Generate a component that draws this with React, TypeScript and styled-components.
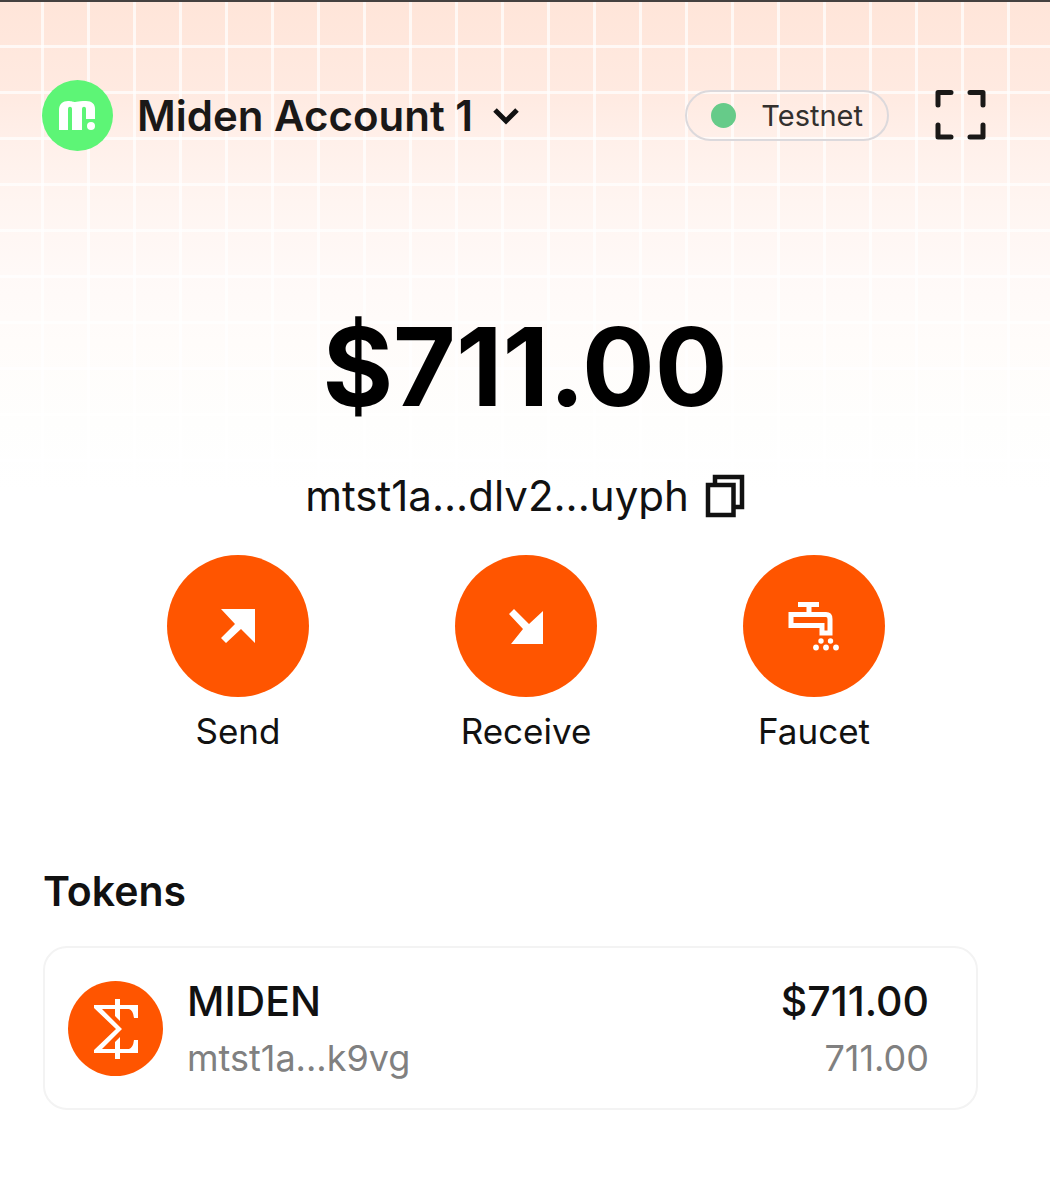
import React from "react";
import styled, { createGlobalStyle } from "styled-components";

const GlobalStyle = createGlobalStyle`
  *, *::before, *::after { box-sizing: border-box; }
  body {
    margin: 0;
    background: #ffffff;
    color: #111111;
    font-family: Inter, "Liberation Sans", sans-serif;
  }
  button {
    margin: 0;
    padding: 0;
    border: 0;
    background: none;
    color: inherit;
    font: inherit;
    cursor: pointer;
  }
  svg { display: block; flex: none; }
`;

const Page = styled.div`
  min-height: 100vh;
  border-top: 2px solid #454140;
`;

const Hero = styled.div`
  background:
    linear-gradient(to right, rgba(255, 255, 255, 0.7) 3px, transparent 3px) -5px 0 / 46px 100%,
    linear-gradient(to bottom, rgba(255, 255, 255, 0.7) 3px, transparent 3px) 0 -3px / 100% 46px,
    linear-gradient(to bottom, #ffe5d9 0, #ffeae1 90px, #fff0ea 140px, #fff5f1 200px, #fff9f7 270px, #fffcfa 340px, #fefefd 420px, #ffffff 490px);
`;

const Header = styled.header`
  display: flex;
  align-items: center;
  justify-content: space-between;
  padding: 78px 64px 0 42px;
`;

const AccountButton = styled.button`
  display: flex;
  align-items: center;
  color: #1a1817;
`;

const AccountName = styled.span`
  margin: 0 18px 0 24px;
  font-size: 42px;
  line-height: 48px;
  font-weight: 600;
`;

const HeaderTools = styled.div`
  display: flex;
  align-items: center;
  gap: 46px;
`;

const NetworkBadge = styled.button`
  display: flex;
  align-items: center;
  gap: 25px;
  height: 51px;
  padding: 0 24px;
  border: 2px solid #dcd9dc;
  border-radius: 26px;
  color: #33302e;
  font-size: 29px;
  line-height: 36px;
`;

const StatusDot = styled.span`
  width: 25px;
  height: 25px;
  border-radius: 50%;
  background: #66cb89;
`;

const Balance = styled.h1`
  margin: 0;
  padding-top: 152px;
  color: #000000;
  text-align: center;
  font-size: 108px;
  line-height: 128px;
  font-weight: 700;
`;

const AddressButton = styled.button`
  display: flex;
  align-items: center;
  gap: 16px;
  margin: 41px auto 0;
  font-size: 42px;
  line-height: 48px;
`;

const Actions = styled.nav`
  display: flex;
  justify-content: center;
  gap: 146px;
  padding: 35px 0 0 2px;
`;

const ActionButton = styled.button`
  display: flex;
  flex-direction: column;
  align-items: center;
  gap: 13px;
  width: 142px;
  font-size: 35px;
  line-height: 42px;
`;

const ActionDisc = styled.span`
  display: grid;
  place-items: center;
  width: 142px;
  height: 142px;
  border-radius: 50%;
  background: #ff5500;
`;

const TokensSection = styled.section`
  padding: 114px 72px 0 43px;
`;

const SectionTitle = styled.h2`
  margin: 0 0 30px;
  font-size: 41px;
  line-height: 50px;
  font-weight: 600;
`;

const TokenRow = styled.button`
  display: flex;
  align-items: center;
  gap: 24px;
  width: 100%;
  padding: 26px 47px 26px 23px;
  border: 2px solid #f3f3f3;
  border-radius: 24px;
  background: #ffffff;
`;

const TokenColumn = styled.span<{ $end?: boolean }>`
  display: flex;
  flex-direction: column;
  gap: 6px;
  margin-left: ${(p) => (p.$end ? "auto" : "0")};
  text-align: ${(p) => (p.$end ? "right" : "left")};
`;

const TokenPrimary = styled.span`
  font-size: 41px;
  line-height: 54px;
  font-weight: 500;
`;

const TokenSecondary = styled.span`
  color: #808080;
  font-size: 36px;
  line-height: 48px;
`;

const MidenAvatar = () => (
  <svg width="71" height="71" viewBox="0 0 71 71" aria-hidden="true">
    <circle cx="35.5" cy="35.5" r="35.5" fill="#5df576" />
    <path
      fill="#ffffff"
      d="M17 50V30C17 24 21 21 26 21c4 0 5 1 7 1s4-1 8-1h3c6 0 9 3 9 8v10h-9V29c0-3-4-3-4 0v21H30V29c0-3-4-3-4 0v21z"
    />
    <circle cx="49" cy="46" r="4" fill="#ffffff" />
  </svg>
);

const ChevronIcon = () => (
  <svg width="30" height="20" viewBox="0 0 30 20" fill="none" aria-hidden="true">
    <path d="M4 4 15 15 26 4" stroke="#111111" strokeWidth="5" />
  </svg>
);

const ExpandIcon = () => (
  <svg width="51" height="51" viewBox="0 0 51 51" fill="none" aria-hidden="true">
    <path
      d="M3 15V2.500H16M35 2.500H48V15M48 35V47H35M16 47H3V35"
      stroke="#1a1817"
      strokeWidth="5"
      strokeLinecap="round"
      strokeLinejoin="round"
    />
  </svg>
);

const CopyIcon = () => (
  <svg width="40" height="44" viewBox="0 0 40 44" fill="none" aria-hidden="true">
    <path d="M10 9V3H37V33H30M3 11H28.5V41H3Z" stroke="#111111" strokeWidth="4.5" />
  </svg>
);

const SendIcon = () => (
  <svg width="34" height="34" viewBox="0 0 34 34" aria-hidden="true">
    <path fill="#ffffff" d="M0 0H34V34L20 20 5 34 0 29 14 15z" />
  </svg>
);

const ReceiveIcon = () => (
  <svg width="36" height="36" viewBox="0 0 36 36" aria-hidden="true">
    <path fill="#ffffff" d="M1 6 6 1 21 16 35 3V36H3L15 21z" />
  </svg>
);

const FaucetIcon = () => (
  <svg width="52" height="50" viewBox="0 0 52 50" fill="none" aria-hidden="true">
    <path d="M10 3.5H31M21 4V12" stroke="#ffffff" strokeWidth="5" />
    <path d="M3 13.5H38Q42 13.5 42 18V32H34V24.500H3Z" stroke="#ffffff" strokeWidth="5" />
    <g fill="#ffffff">
      <circle cx="33" cy="40" r="2.700" />
      <circle cx="42.500" cy="40" r="2.700" />
      <circle cx="28" cy="46.500" r="2.900" />
      <circle cx="38" cy="46.500" r="2.900" />
      <circle cx="48" cy="46.500" r="2.900" />
    </g>
  </svg>
);

const SigmaToken = () => (
  <svg width="95" height="95" viewBox="0 0 95 95" fill="none" aria-hidden="true">
    <circle cx="47.5" cy="47.5" r="47.5" fill="#ff5500" />
    <path
      fill="#ffffff"
      d="M26 24H47V18H52V24H70V37H66Q65 29 61 28H52V40L47 35V28H34L54 48 34 68H47V61L52 56V68H61Q65 67 66 59H70V72H52V78H47V72H26V69L48 48 26 27Z"
    />
  </svg>
);

export default function App() {
  return (
    <Page>
      <GlobalStyle />
      <Hero>
        <Header>
          <AccountButton type="button">
            <MidenAvatar />
            <AccountName>Miden Account 1</AccountName>
            <ChevronIcon />
          </AccountButton>
          <HeaderTools>
            <NetworkBadge type="button">
              <StatusDot />
              Testnet
            </NetworkBadge>
            <button type="button" aria-label="Open full screen">
              <ExpandIcon />
            </button>
          </HeaderTools>
        </Header>
        <Balance>$711.00</Balance>
        <AddressButton type="button" title="Copy address">
          mtst1a...dlv2...uyph
          <CopyIcon />
        </AddressButton>
      </Hero>
      <Actions>
        <ActionButton type="button">
          <ActionDisc><SendIcon /></ActionDisc>
          Send
        </ActionButton>
        <ActionButton type="button">
          <ActionDisc><ReceiveIcon /></ActionDisc>
          Receive
        </ActionButton>
        <ActionButton type="button">
          <ActionDisc><FaucetIcon /></ActionDisc>
          Faucet
        </ActionButton>
      </Actions>
      <TokensSection>
        <SectionTitle>Tokens</SectionTitle>
        <TokenRow type="button">
          <SigmaToken />
          <TokenColumn>
            <TokenPrimary>MIDEN</TokenPrimary>
            <TokenSecondary>mtst1a...k9vg</TokenSecondary>
          </TokenColumn>
          <TokenColumn $end>
            <TokenPrimary>$711.00</TokenPrimary>
            <TokenSecondary>711.00</TokenSecondary>
          </TokenColumn>
        </TokenRow>
      </TokensSection>
    </Page>
  );
}
